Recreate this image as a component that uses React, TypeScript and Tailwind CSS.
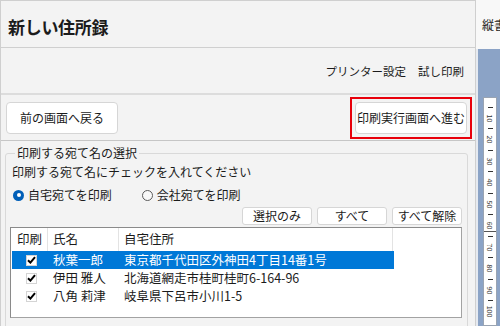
import React from 'react';

const rows = [
  { name: '秋葉一郎', addr: '東京都千代田区外神田4丁目14番1号', selected: true },
  { name: '伊田 雅人', addr: '北海道網走市桂町桂町6-164-96', selected: false },
  { name: '八角 莉津', addr: '岐阜県下呂市小川1-5', selected: false },
];

function Check() {
  return (
    <div className="w-[11px] h-[11px] bg-white border border-[#d4d4d4] flex items-center justify-center">
      <svg width="9" height="8" viewBox="0 0 9 8">
        <path d="M1 4.2 L3.4 6.6 L8 1.2" fill="none" stroke="#000" strokeWidth="2" />
      </svg>
    </div>
  );
}

function Ruler() {
  const items: string[] = [];
  for (let i = 1; i <= 10; i++) {
    items.push('-');
    items.push(String(i * 10));
  }
  return (
    <div className="mt-[48px] ml-[5px] w-[14px] flex-1 bg-white border border-[#9aa4b2] flex flex-col items-center pt-[4px]">
      {items.map((t, i) => (
        <div
          key={i}
          className={`h-[10.75px] w-full flex items-center justify-center shrink-0 ${i === 12 ? 'border-t border-[#555]' : ''}`}
        >
          {t === '-' ? (
            <div className="w-[5px] h-[1px] bg-[#333]" />
          ) : (
            <span className="text-[7px] leading-none text-[#333] rotate-90 inline-block">{t}</span>
          )}
        </div>
      ))}
    </div>
  );
}

export default function App() {
  return (
    <div className="w-[500px] h-[326px] overflow-hidden flex bg-[#f3f3f3] text-[#1b1b1b] font-['Noto_Sans_CJK_JP',sans-serif]">
      <div className="w-[476px] shrink-0 flex flex-col border-l border-t border-r border-[#cfcfcf]">
        <div className="h-[47px] shrink-0 border-b border-[#cfcfcf] flex items-center px-[7px] pt-[4px]">
          <span className="text-[17px] font-bold leading-none tracking-[-0.3px]">新しい住所録</span>
        </div>
        <div className="h-[47px] shrink-0 border-b-2 border-[#dcdcdc] flex items-center justify-end gap-[12px] pr-[11px] pt-[2px] text-[11.5px]">
          <span>プリンター設定</span>
          <span>試し印刷</span>
        </div>
        <div className="h-[46px] shrink-0 border-b border-[#c6c6c6] flex items-center justify-between pl-[5px] pr-[3px]">
          <button className="w-[112px] h-[32px] bg-white border border-[#d6d6d6] rounded-[4px] text-[12px]">
            前の画面へ戻る
          </button>
          <div className="border-[2px] border-[#e8000b] p-[3px]">
            <button className="w-[112px] h-[32px] bg-white border border-[#d6d6d6] rounded-[4px] text-[12px]">
              印刷実行画面へ進む
            </button>
          </div>
        </div>
        <div className="pl-[4px] pr-[7px] pt-[5px] flex-1">
          <fieldset className="border border-[#d9d9d9] rounded-[3px] h-[200px] pl-[4px] pr-[5px]">
            <legend className="ml-[5px] px-[2px] text-[12px] leading-[14px]">印刷する宛て名の選択</legend>
            <div className="text-[12px] leading-[14px] mt-[5px] ml-[2px]">印刷する宛て名にチェックを入れてください</div>
            <div className="flex items-center mt-[9px] ml-[3px] text-[12px] leading-[14px]">
              <div className="w-[11px] h-[11px] rounded-full bg-[#005fb8] flex items-center justify-center">
                <div className="w-[4px] h-[4px] rounded-full bg-white" />
              </div>
              <span className="ml-[4px]">自宅宛てを印刷</span>
              <div className="ml-[30px] w-[11px] h-[11px] rounded-full border border-[#5a5a5a] bg-[#f8f8f8]" />
              <span className="ml-[4px]">会社宛てを印刷</span>
            </div>
            <div className="flex justify-end gap-[5px] mt-[5px] text-[12px]">
              <button className="w-[70px] h-[18px] bg-white border border-[#d6d6d6] rounded-[3px] leading-none">選択のみ</button>
              <button className="w-[70px] h-[18px] bg-white border border-[#d6d6d6] rounded-[3px] leading-none">すべて</button>
              <button className="w-[70px] h-[18px] bg-white border border-[#d6d6d6] rounded-[3px] leading-none">すべて解除</button>
            </div>
            <div className="mt-[2px] h-[91px] bg-white border border-[#a3a3a3] border-t-[#8a8a8a] border-l-[#8a8a8a] text-[12.5px]">
              <div className="flex h-[23px] items-center">
                <div className="w-[37px] h-full border-r border-[#e3e3e3] flex items-center pl-[6px]">印刷</div>
                <div className="w-[71px] h-full border-r border-[#e3e3e3] flex items-center pl-[5px]">氏名</div>
                <div className="w-[274px] h-full border-r border-[#e3e3e3] flex items-center pl-[5px]">自宅住所</div>
              </div>
              {rows.map((r) => (
                <div
                  key={r.name}
                  className={`flex h-[18px] items-center w-[382px] ml-[1px] ${r.selected ? 'bg-[#0078d7] text-white' : ''}`}
                >
                  <div className="w-[36px] flex justify-center pl-[2px]">
                    <Check />
                  </div>
                  <div className="w-[71px] pl-[5px] whitespace-nowrap">{r.name}</div>
                  <div className="pl-[5px] whitespace-nowrap">{r.addr}</div>
                </div>
              ))}
            </div>
          </fieldset>
        </div>
      </div>
      <div className="flex-1 flex flex-col">
        <div className="h-[49px] shrink-0 bg-[#f8f8f8] flex items-center pl-[6px] text-[12px] whitespace-nowrap overflow-hidden">
          縦書
        </div>
        <div className="flex-1 bg-[#8ba3c6] border-l-2 border-[#e6eaf0] flex flex-col">
          <Ruler />
        </div>
      </div>
    </div>
  );
}
